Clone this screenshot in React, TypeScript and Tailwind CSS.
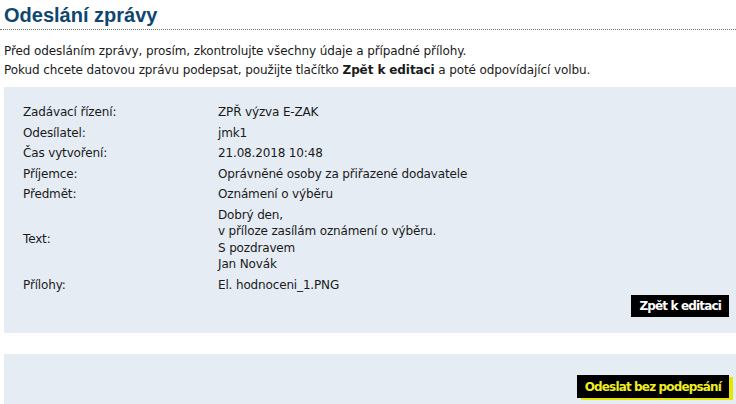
import React from "react";

const rows: { label: string; value: React.ReactNode }[] = [
  { label: "Zadávací řízení:", value: "ZPŘ výzva E-ZAK" },
  { label: "Odesílatel:", value: "jmk1" },
  { label: "Čas vytvoření:", value: "21.08.2018 10:48" },
  { label: "Příjemce:", value: "Oprávněné osoby za přiřazené dodavatele" },
  { label: "Předmět:", value: "Oznámení o výběru" },
  {
    label: "Text:",
    value: (
      <>
        Dobrý den,
        <br />v příloze zasílám oznámení o výběru.
        <br />S pozdravem
        <br />Jan Novák
      </>
    ),
  },
  { label: "Přílohy:", value: "El. hodnoceni_1.PNG" },
];

export default function App() {
  return (
    <div
      className="w-[736px] h-[404px] overflow-hidden bg-white text-[#1a1a1a]"
      style={{ fontFamily: "'DejaVu Sans', Verdana, sans-serif" }}
    >
      <div className="px-[4px] pt-[2px]">
        <h1
          className="text-[20px] leading-[26px] font-bold text-[#0f4670]"
          style={{ fontFamily: "'Liberation Sans', Arial, sans-serif" }}
        >
          Odeslání zprávy
        </h1>
      </div>
      <div className="mt-[1px] border-b border-dotted border-[#6a7a80]" />
      <div className="px-[4px] pt-[12px] text-[12px] leading-[19px] tracking-[-0.1px]">
        <p>Před odesláním zprávy, prosím, zkontrolujte všechny údaje a případné přílohy.</p>
        <p>
          Pokud chcete datovou zprávu podepsat, použijte tlačítko <b>Zpět k editaci</b> a poté
          odpovídající volbu.
        </p>
      </div>
      <div className="ml-[4px] mt-[7px] bg-[#e5ecf4] pl-[19px] pr-[7px] pt-[15px] pb-[16px] text-[12px] leading-[16.5px] tracking-[-0.15px]">
        <div className="flex flex-col">
          {rows.map((r) => (
            <div key={r.label} className="flex items-center py-[2px]">
              <div className="w-[195px] shrink-0">{r.label}</div>
              <div>{r.value}</div>
            </div>
          ))}
        </div>
        <div className="flex justify-end">
          <button className="h-[22px] px-[8px] bg-black text-white font-bold text-[12px] tracking-[-0.85px]">
            Zpět k editaci
          </button>
        </div>
      </div>
      <div className="ml-[4px] mt-[21px] h-[60px] bg-[#e5ecf4] pr-[7px] pt-[21px]">
        <div className="flex justify-end">
          <button className="h-[23px] px-[8px] bg-black text-[#eeee22] font-bold text-[12px] tracking-[-0.85px] shadow-[4px_2px_0_#e6e600]">
            Odeslat bez podepsání
          </button>
        </div>
      </div>
    </div>
  );
}
